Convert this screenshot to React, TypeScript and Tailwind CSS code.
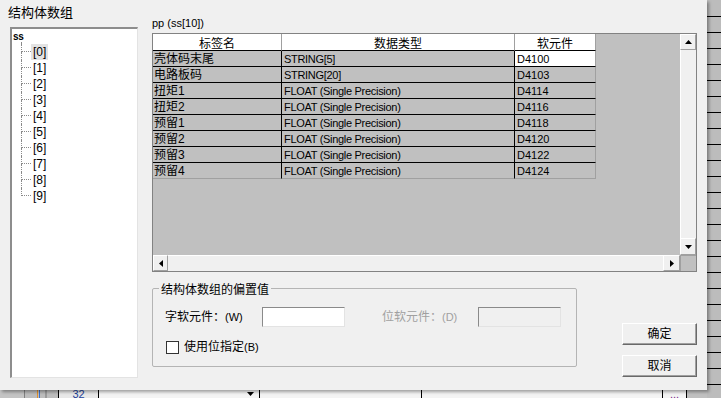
import React from "react";

const FLOAT = "FLOAT (Single Precision)";

// rows of the struct member table
const rows: [string, string, string][] = [
  ["壳体码末尾", "STRING[5]", "D4100"],
  ["电路板码", "STRING[20]", "D4103"],
  ["扭矩1", FLOAT, "D4114"],
  ["扭矩2", FLOAT, "D4116"],
  ["预留1", FLOAT, "D4118"],
  ["预留2", FLOAT, "D4120"],
  ["预留3", FLOAT, "D4122"],
  ["预留4", FLOAT, "D4124"],
];

function Arrow({ dir }: { dir: "up" | "down" | "left" | "right" }) {
  const pts = {
    up: "0,4 7,4 3.5,0",
    down: "0,0 7,0 3.5,4",
    left: "4,0 4,7 0,3.5",
    right: "0,0 0,7 4,3.5",
  }[dir];
  const vert = dir === "up" || dir === "down";
  return (
    <svg width={vert ? 7 : 4} height={vert ? 4 : 7}>
      <polygon points={pts} fill="#000" />
    </svg>
  );
}

function ScrollBtn({ dir, className }: { dir: "up" | "down" | "left" | "right"; className: string }) {
  return (
    <div
      className={`flex shrink-0 items-center justify-center border border-t-white border-l-white border-r-[#a0a0a0] border-b-[#a0a0a0] bg-[#f0f0f0] ${className}`}
    >
      <Arrow dir={dir} />
    </div>
  );
}

function Tree() {
  const items = [0, 1, 2, 3, 4, 5, 6, 7, 8, 9];
  return (
    <div className="ml-[10px] h-[351px] w-[128px] border-l-2 border-t-2 border-r border-b border-l-[#8d8d8d] border-t-[#8d8d8d] border-r-[#e3e3e3] border-b-[#e3e3e3] bg-white">
      <div className="h-[13px] pl-[1px] text-[10px] font-bold leading-[15px] tracking-[-0.3px]">ss</div>
      <div className="ml-[9px] h-[2px] border-l border-dotted border-[#8a8a8a]" />
      {items.map((n) => (
        <div key={n} className="flex h-[16px]">
          <div className="ml-[9px] flex w-[10px] flex-col">
            <div className="h-[8px] border-l border-b border-dotted border-[#8a8a8a]" />
            <div className={n < 9 ? "flex-1 border-l border-dotted border-[#8a8a8a]" : "flex-1"} />
          </div>
          <div
            className={`px-[2px] text-[12px] leading-[16px] ${n === 0 ? "bg-[#e3e3e3]" : ""}`}
          >
            [{n}]
          </div>
        </div>
      ))}
    </div>
  );
}

function Table() {
  return (
    <div className="flex h-[239px] w-[545px] flex-col border border-[#828282] bg-[#c0c0c0]">
      <div className="flex h-[221px]">
        <div className="flex w-[527px] flex-col">
          <div className="flex h-[17px] text-[12px] leading-[12px]">
            <div className="h-[17px] w-[129px] overflow-hidden border-r border-b border-r-[#a0a0a0] border-b-black bg-white pt-[4px] text-center">
              标签名
            </div>
            <div className="h-[17px] w-[233px] overflow-hidden border-r border-b border-r-[#a0a0a0] border-b-black bg-white pt-[4px] text-center">
              数据类型
            </div>
            <div className="h-[17px] w-[81px] overflow-hidden border-r border-b border-r-[#a0a0a0] border-b-black bg-white pt-[4px] text-center">
              软元件
            </div>
          </div>
          {rows.map(([name, type, dev], i) => {
            const last = i === rows.length - 1;
            const bb = last ? "border-b-[#a0a0a0]" : "border-b-black";
            return (
              <div key={name} className="flex h-[16px]">
                <div className={`w-[129px] border-r border-b border-r-black ${bb} pl-[1px] pt-[1px] text-[12px] leading-[14px]`}>
                  {name}
                </div>
                <div className={`w-[233px] border-r border-b border-r-black ${bb} pl-[2px] pt-[1px] text-[11px] leading-[14px] tracking-[-0.3px]`}>
                  {type}
                </div>
                <div
                  className={`w-[81px] border-r border-b border-r-[#a0a0a0] ${bb} pl-[2px] pt-[1px] text-[11px] leading-[14px] ${i === 0 ? "bg-white" : ""}`}
                >
                  {dev}
                </div>
              </div>
            );
          })}
        </div>
        <div className="flex w-[16px] flex-col">
          <ScrollBtn dir="up" className="h-[16px]" />
          <div className="flex-1 border-l border-white bg-[#f0f0f0]" />
          <ScrollBtn dir="down" className="h-[17px]" />
        </div>
      </div>
      <div className="flex h-[16px]">
        <div className="flex w-[527px]">
          <ScrollBtn dir="left" className="w-[15px]" />
          <div className="flex-1 border-t border-white bg-[#f0f0f0]" />
          <ScrollBtn dir="right" className="w-[17px]" />
        </div>
        <div className="w-[16px] border-t border-l border-[#a0a0a0] bg-[#c0c0c0]" />
      </div>
    </div>
  );
}

function Offsets() {
  const sunken = "h-[20px] w-[83px] border border-t-[#8a8a8a] border-l-[#8a8a8a] border-r-[#e3e3e3] border-b-[#e3e3e3]";
  return (
    <div className="flex h-[79px] w-[426px] flex-col rounded-[2px] border border-[#b4b4b4]">
      <div className="-mt-[5px] ml-[6px] w-fit bg-[#f0f0f0] px-[2px] text-[12px] leading-[12px]">
        结构体数组的偏置值
      </div>
      <div className="mt-[11px] flex h-[20px] items-center pl-[12px] text-[12px]">
        <div className="w-[97px]">
          字软元件：<span className="text-[11px]">(W)</span>
        </div>
        <div className={`${sunken} bg-white`} />
        <div className="ml-[37px] w-[96px] text-[#a0a0a0]">
          位软元件：<span className="text-[11px]">(D)</span>
        </div>
        <div className={`${sunken} bg-[#f0f0f0]`} />
      </div>
      <div className="mt-[11px] flex items-center pl-[13px] text-[12px]">
        <div className="h-[13px] w-[13px] border border-[#333] bg-white" />
        <div className="ml-[5px]">
          使用位指定<span className="text-[11px]">(B)</span>
        </div>
      </div>
    </div>
  );
}

function Button({ label }: { label: string }) {
  return (
    <div className="flex h-[22px] w-[75px] items-center justify-center border border-t-white border-l-white border-r-[#696969] border-b-[#696969] bg-[#f0f0f0] text-[12px] shadow-[inset_-1px_-1px_0_#a0a0a0]">
      {label}
    </div>
  );
}

function SheetRow() {
  return (
    <div className="flex h-[16px] text-[11px] leading-[16px]">
      <div className="w-[25px] border-r border-[#808080] bg-[#c4c4c4]" />
      <div className="flex w-[34px] border-r border-black bg-[#bdbdbd]">
        <div className="ml-[12px] w-[1px] bg-[#e0902a]" />
        <div className="ml-[1px] w-[1px] bg-[#3c6fc8]" />
        <div className="ml-[5px] w-[2px] bg-[#9a9a9a]" />
      </div>
      <div className="w-[40px] border-r border-black bg-[#e8e8e8] text-center text-[#1d3f98]">32</div>
      <div className="flex w-[161px] items-center justify-end border-r border-black bg-[#f4f4f4] pr-[5px]">
        <Arrow dir="down" />
      </div>
      <div className="w-[162px] border-r border-black bg-[#f4f4f4]" />
      <div className="w-[241px] border-r border-black bg-[#f4f4f4]" />
      <div className="w-[24px] border-r border-black bg-[#f4f4f4] text-center text-[#7a2a8a]">...</div>
      <div className="flex-1 bg-[#c0c0c0]" />
    </div>
  );
}

export default function App() {
  return (
    <div className="relative h-[398px] w-[721px] overflow-hidden bg-[#f0f0f0] font-['Liberation_Sans','Noto_Sans_CJK_SC',sans-serif] text-black">
      {/* sheet behind the dialog */}
      <div className="flex h-full">
        <div className="flex w-[707px] flex-col">
          <div className="h-[386px] shrink-0" />
          <SheetRow />
        </div>
        <div className="flex flex-1 flex-col bg-[#bcbcbc] pt-[1px]">
          {Array.from({ length: 25 }).map((_, i) => (
            <div key={i} className="h-[16px] shrink-0 border-b border-black" />
          ))}
        </div>
      </div>

      {/* dialog */}
      <div className="absolute left-0 top-0 flex h-[390px] w-[707px] bg-[#f0f0f0] shadow-[2px_2px_3px_rgba(0,0,0,0.35)]">
        <div className="flex w-[152px] flex-col">
          <div className="h-[27px] pl-[8px] pt-[5px] text-[13px] leading-[16px]">结构体数组</div>
          <Tree />
        </div>
        <div className="flex w-[545px] flex-col pt-[14px]">
          <div className="h-[19px] text-[11px] leading-[19px]">pp (ss[10])</div>
          <Table />
          <div className="mt-[16px] flex">
            <Offsets />
            <div className="ml-[45px] mt-[35px] flex flex-col gap-[10px]">
              <Button label="确定" />
              <Button label="取消" />
            </div>
          </div>
        </div>
      </div>
    </div>
  );
}
